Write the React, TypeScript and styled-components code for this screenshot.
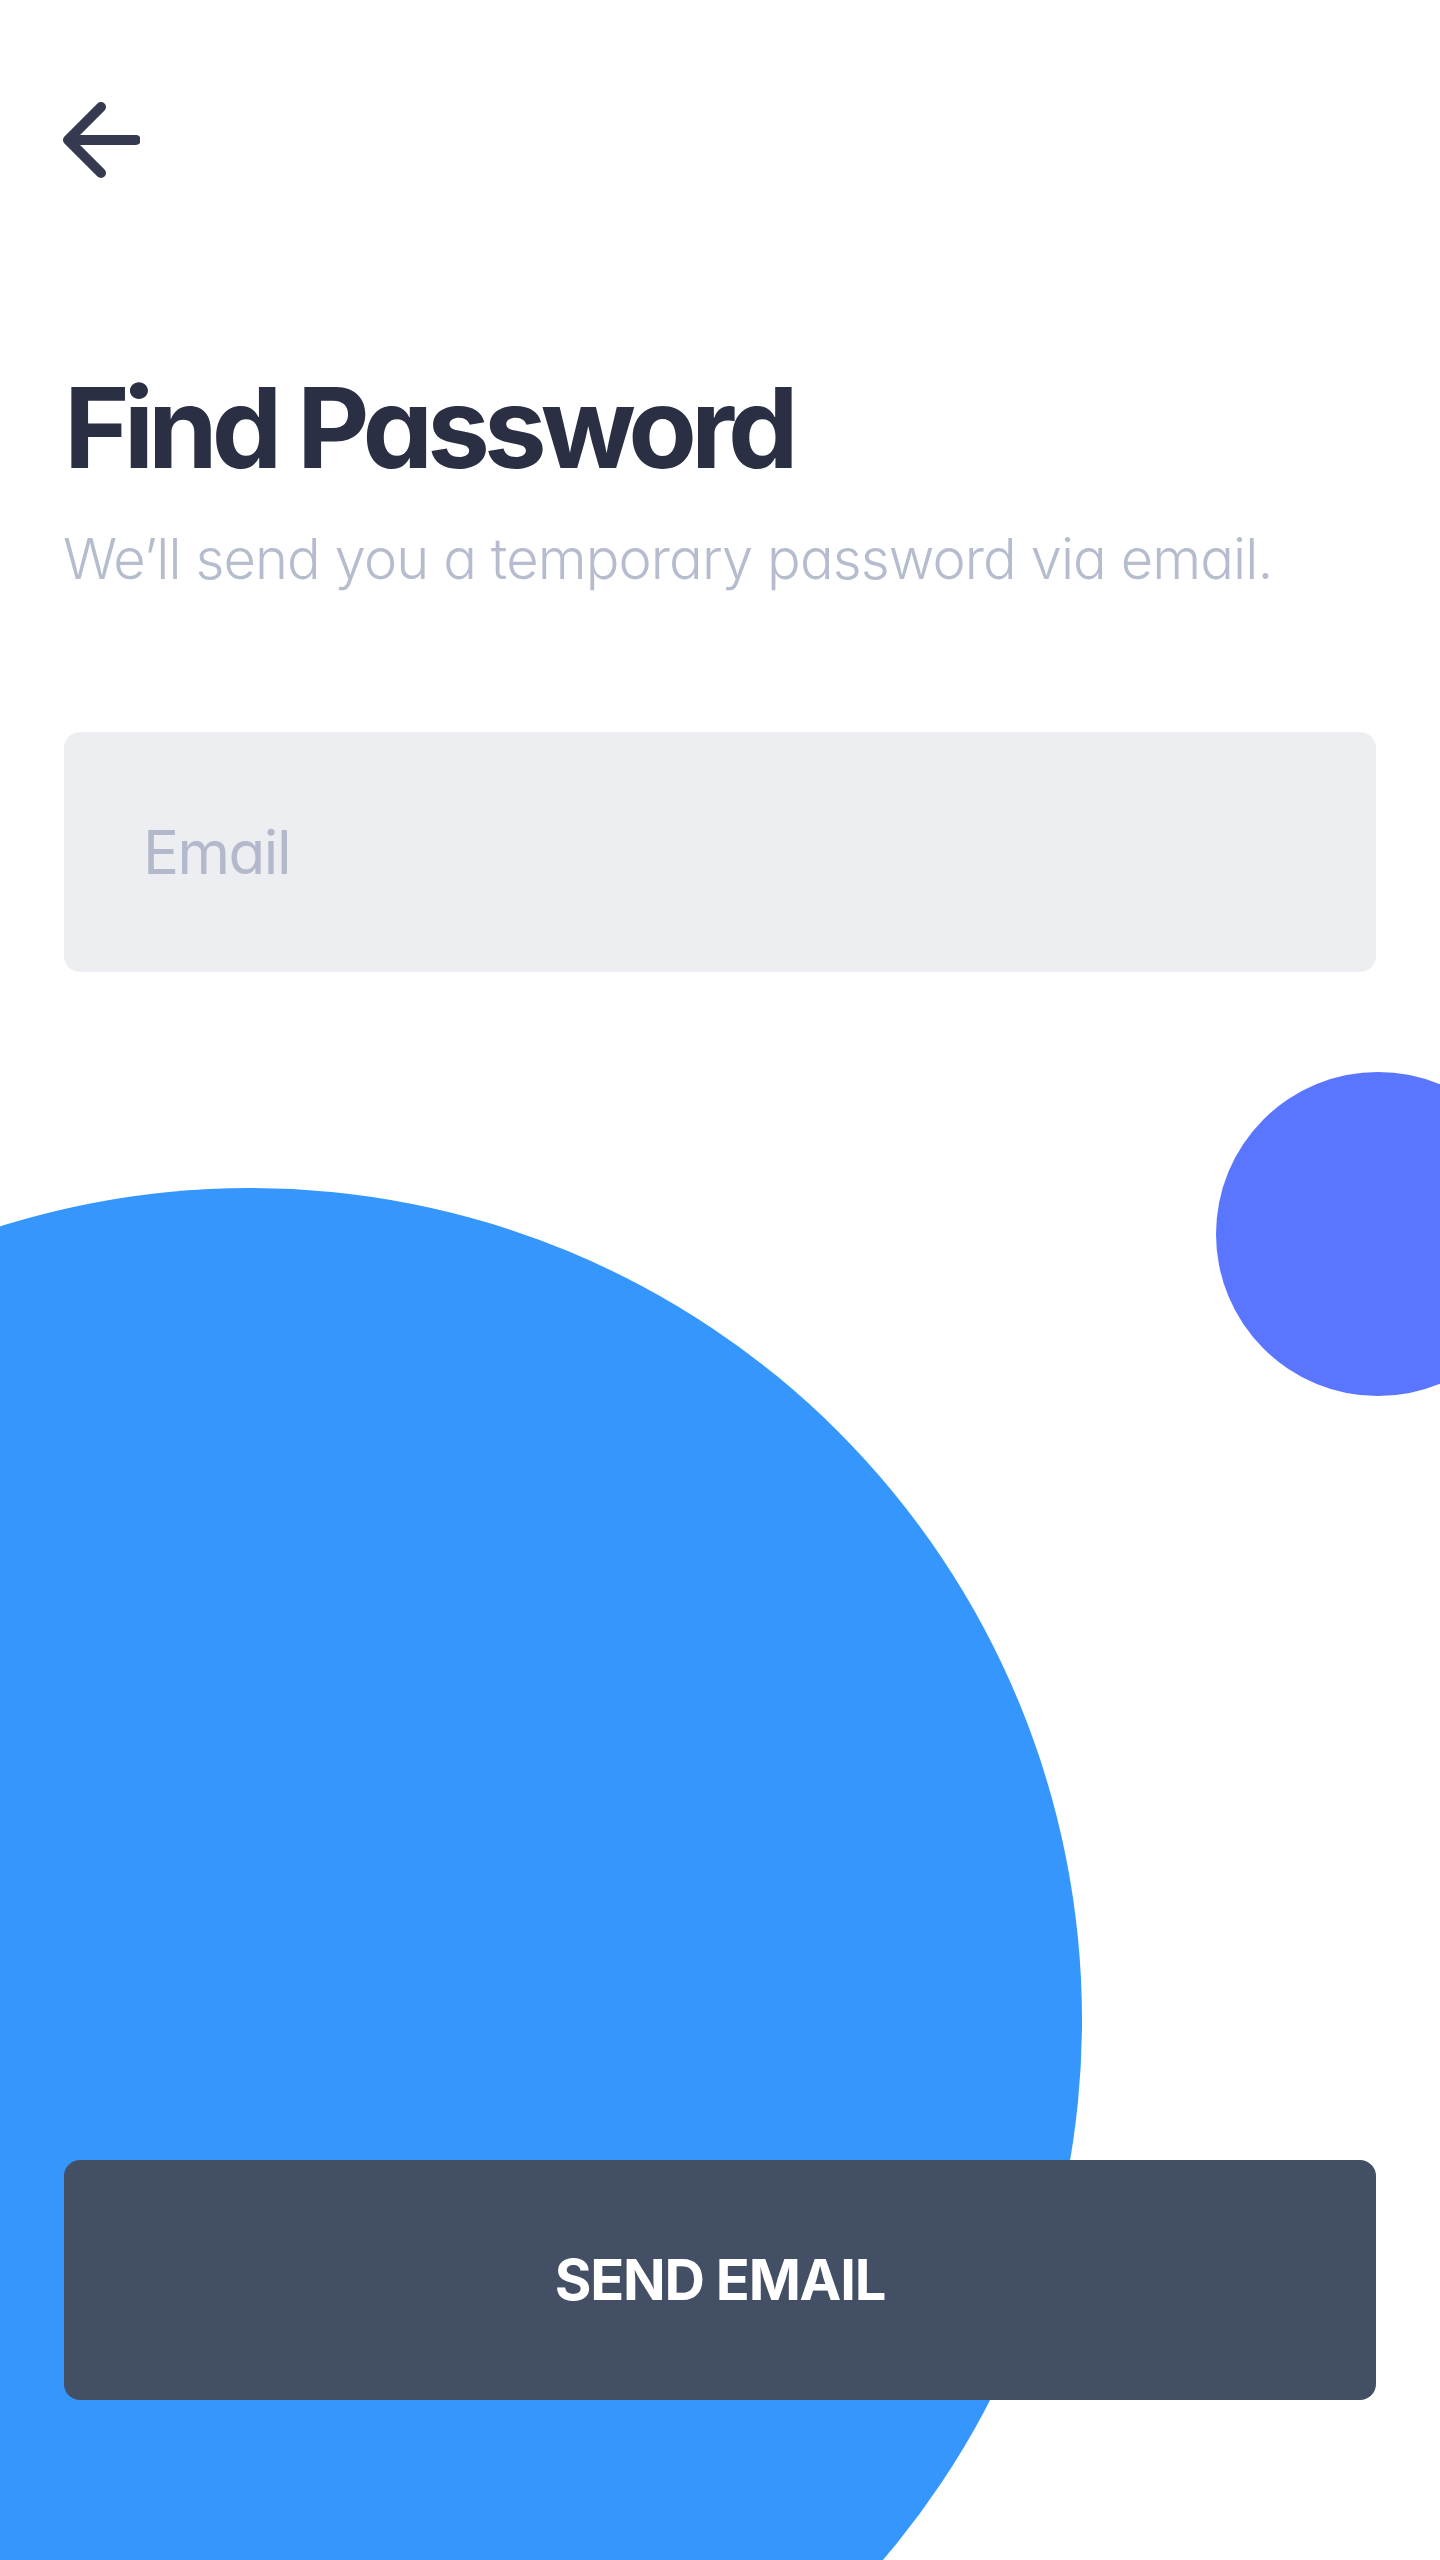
import React from "react";
import styled, { createGlobalStyle } from "styled-components";

const GlobalStyle = createGlobalStyle`
  html, body {
    margin: 0;
    padding: 0;
    background: #ffffff;
  }
  body {
    font-family: Inter, "Noto Sans", "Liberation Sans", sans-serif;
    font-feature-settings: "cv11" 1;
  }
  * { box-sizing: border-box; }
`;

const Screen = styled.div`
  position: relative;
  width: 1440px;
  height: 2560px;
  overflow: hidden;
  background: #ffffff;
`;

const Blob = styled.div<{ $size: number; $color: string; $left: number; $top: number }>`
  position: absolute;
  left: ${(p) => p.$left}px;
  top: ${(p) => p.$top}px;
  width: ${(p) => p.$size}px;
  height: ${(p) => p.$size}px;
  border-radius: 50%;
  background: ${(p) => p.$color};
  z-index: 0;
`;

const Content = styled.main`
  position: relative;
  z-index: 1;
  display: flex;
  flex-direction: column;
  height: 100%;
  padding: 0 64px 160px;
`;

const BackButton = styled.button`
  display: flex;
  align-items: center;
  justify-content: center;
  width: 80px;
  height: 80px;
  margin: 100px 0 0 -4px;
  padding: 0;
  border: 0;
  background: transparent;
  cursor: pointer;
`;

const Title = styled.h1`
  margin: 180px 0 0 0;
  font-size: 112px;
  line-height: 1.21;
  font-weight: 700;
  letter-spacing: -6px;
  color: #2a2f44;
`;

const Subtitle = styled.p`
  margin: 30px 0 0 -1px;
  font-size: 56px;
  line-height: 1.21;
  font-weight: 300;
  letter-spacing: -0.9px;
  color: #b5bccd;
`;

const Field = styled.input`
  margin-top: 139px;
  height: 240px;
  width: 100%;
  border: 0;
  border-radius: 16px;
  background: #edeef2;
  padding: 0 0 0 79px;
  font-family: inherit;
  font-feature-settings: "cv11" 1;
  font-size: 60px;
  font-weight: 400;
  letter-spacing: -1.5px;
  color: #2a2f44;
  outline: none;
  &::placeholder {
    color: #b3b9cb;
  }
`;

const SubmitButton = styled.button`
  margin-top: auto;
  height: 240px;
  width: 100%;
  border: 0;
  border-radius: 16px;
  background: #434f65;
  color: #ffffff;
  font-family: inherit;
  font-feature-settings: "cv11" 1;
  font-size: 56px;
  font-weight: 700;
  letter-spacing: -1.2px;
  cursor: pointer;
`;

function BackArrow() {
  return (
    <svg width="80" height="80" viewBox="0 0 80 80" fill="none">
      <path
        d="M41 7 L8 40 L41 73 M8 40 H76"
        stroke="#353a51"
        strokeWidth="10"
        strokeLinecap="round"
        strokeLinejoin="round"
      />
    </svg>
  );
}

export default function App() {
  return (
    <>
      <GlobalStyle />
      <Screen>
        <Blob $size={1664} $color="#3597fe" $left={250 - 832} $top={1188} />
        <Blob $size={324} $color="#5a76ff" $left={1216} $top={1072} />
        <Content>
          <BackButton aria-label="Back">
            <BackArrow />
          </BackButton>
          <Title>Find Password</Title>
          <Subtitle>We’ll send you a temporary password via email.</Subtitle>
          <Field type="email" placeholder="Email" />
          <SubmitButton>SEND EMAIL</SubmitButton>
        </Content>
      </Screen>
    </>
  );
}
